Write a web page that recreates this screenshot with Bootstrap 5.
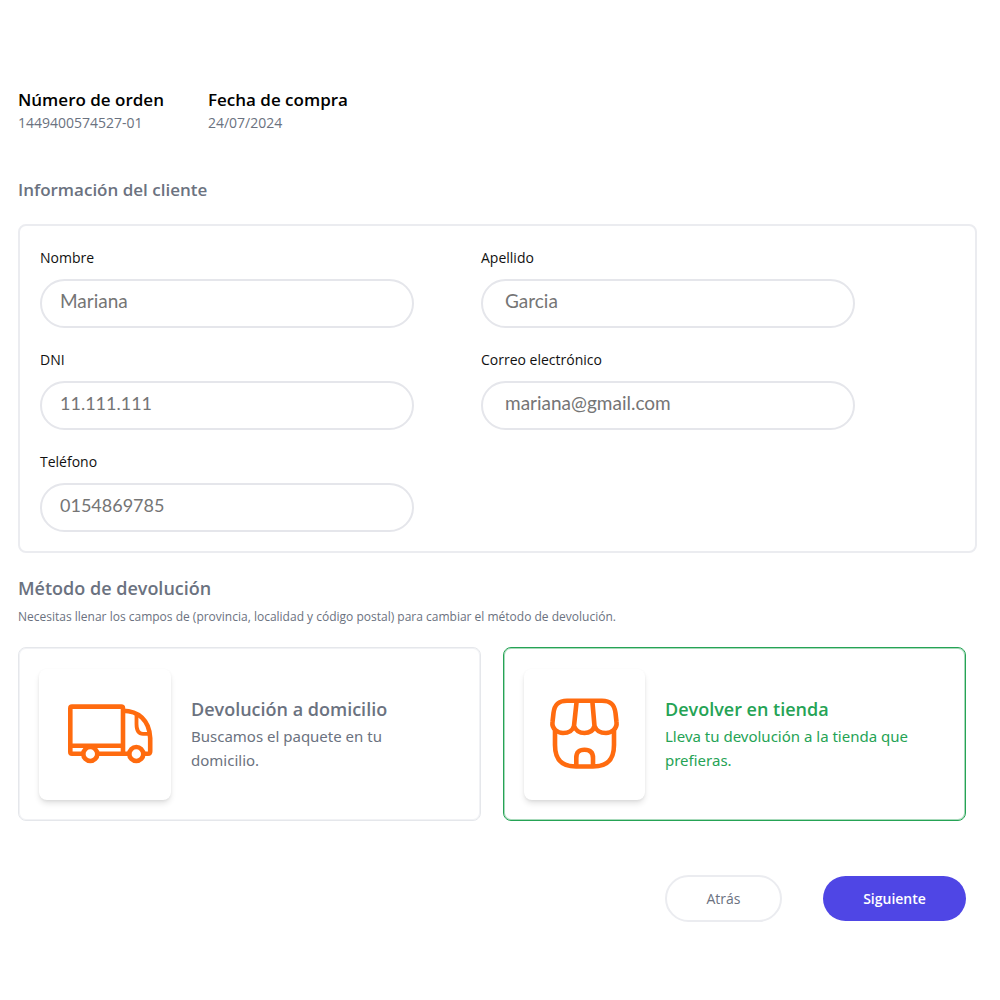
<!DOCTYPE html>
<html lang="es">
<head>
<meta charset="utf-8">
<meta name="viewport" content="width=device-width, initial-scale=1">
<title>Devolución de compra</title>
<link rel="stylesheet" href="https://cdn.jsdelivr.net/npm/bootstrap@5.3.0/dist/css/bootstrap.min.css">
<script src="https://cdn.jsdelivr.net/npm/bootstrap@5.3.0/dist/js/bootstrap.bundle.min.js" defer></script>
<style>
  :root { --gray: #6b7280; --line: #ebecf0; --green: #25a355; --indigo: #4f46e5; --orange: #ff6b0f; }
  body { font-family: "Open Sans", "Noto Sans", sans-serif; font-size: 14px; line-height: 20px; color: #111827; background: #fff; }
  .page-wrap { padding: 87px 23px 40px 18px; }
  .order-head { gap: 44px; margin-bottom: 44px; }
  .head-title { font-size: 17px; line-height: 26px; font-weight: 600; margin: 0; }
  .head-large { font-size: 18px; }
  .order-head .head-title { color: #000; }
  .gray-text { color: var(--gray); }
  .panel { border: 2px solid var(--line); border-radius: 8px; }
  .client-panel { padding: 22px 120px 19px 20px; margin: 21px 0 22px; }
  .client-grid { display: grid; grid-template-columns: 1fr 1fr; gap: 22px 67px; }
  .client-grid label { display: block; margin-bottom: 11px; color: #111; }
  .pill-input { height: 49px; border: 2px solid #e5e6eb; border-radius: 25px; padding: 0 18px 6px; font-family: Lato, sans-serif; font-size: 19px; color: #757575; }
  .pill-number { font-size: 18px; }
  .pill-wide { padding-left: 22px; }
  .hint { font-size: 12px; line-height: 20px; color: var(--gray); margin: 6px 0 20px; }
  .indent-end { padding-right: 11px; }
  .method-grid { display: grid; grid-template-columns: 1fr 1fr; gap: 22px; }
  .method { padding: 20px 46px 20px 20px; height: 174px; gap: 20px; border-width: 1px; box-shadow: inset 0 0 0 1px #f1f2f5; border-color: #e5e7eb; cursor: pointer; color: var(--gray); font-family: "Noto Sans", sans-serif; font-size: 15px; line-height: 24px; }
  .method .head-title { font-family: "Open Sans", sans-serif; margin-bottom: 2px; }
  .btn-check:checked + .method { color: var(--green); border-color: var(--green); box-shadow: inset 0 0 0 1px rgba(37,163,85,.4); }
  .tile { height: 131px; width: 132px; border-radius: 8px; box-shadow: 0 4px 6px -1px rgba(0,0,0,.13), 0 1px 3px rgba(0,0,0,.05); }
  .tile-slim { width: 121px; }
  .tile svg { fill: none; stroke: var(--orange); stroke-width: 5; stroke-linejoin: round; stroke-linecap: round; }
  .actions { gap: 41px; margin-top: 54px; }
  .pill-btn { border-radius: 24px; font-size: 14px; }
  .pill-back { width: 117px; height: 47px; border: 2px solid var(--line); color: var(--gray); background: #fff; }
  .pill-next { width: 143px; height: 45px; background: var(--indigo); color: #fff; font-weight: 600; }
  .pill-next:hover { background: #4338ca; color: #fff; }
</style>
</head>
<body>
<main class="page-wrap">
  <header class="order-head d-flex">
    <div>
      <h1 class="head-title">Número de orden</h1>
      <div class="gray-text">1449400574527-01</div>
    </div>
    <div>
      <h2 class="head-title">Fecha de compra</h2>
      <div class="gray-text">24/07/2024</div>
    </div>
  </header>

  <form>
    <h2 class="head-title gray-text">Información del cliente</h2>
    <section class="panel client-panel">
      <div class="client-grid">
        <div><label for="nombre">Nombre</label><input id="nombre" type="text" class="form-control pill-input" value="Mariana"></div>
        <div><label for="apellido">Apellido</label><input id="apellido" type="text" class="form-control pill-input pill-wide" value="Garcia"></div>
        <div><label for="dni">DNI</label><input id="dni" type="text" class="form-control pill-input pill-number" value="11.111.111"></div>
        <div><label for="correo">Correo electrónico</label><input id="correo" type="email" class="form-control pill-input pill-wide" value="mariana@gmail.com"></div>
        <div><label for="telefono">Teléfono</label><input id="telefono" type="tel" class="form-control pill-input pill-number" value="0154869785"></div>
      </div>
    </section>

    <h2 class="head-title head-large gray-text">Método de devolución</h2>
    <p class="hint">Necesitas llenar los campos de (provincia, localidad y código postal) para cambiar el método de devolución.</p>

    <div class="indent-end">
      <div class="method-grid">
        <div>
          <input type="radio" class="btn-check" name="metodo" id="domicilio">
          <label for="domicilio" class="panel method d-flex align-items-center">
            <span class="tile flex-shrink-0 d-flex align-items-center justify-content-center">
              <svg width="98" height="64" viewBox="0 0 98 64" aria-hidden="true">
                <path stroke-width="4.600" d="M27 51.800H16Q14.300 51.800 14.300 50V6.500Q14.300 4.600 16 4.600H65.200Q67 4.600 67 6.500V51.800M14.300 43.700H67M42 51.800H73M67 8.700C82 8.700 93.500 18 94.200 36V49.300Q94.200 51.800 92 51.800H88"/>
                <path stroke-width="3.800" d="M80.500 13V22C80.500 28.500 82.500 31.800 87 31.800H93"/>
                <circle stroke-width="4.600" cx="34.300" cy="52" r="7"/><circle stroke-width="4.600" cx="80.300" cy="52" r="7"/>
              </svg>
            </span>
            <span><strong class="head-title head-large d-block">Devolución a domicilio</strong>Buscamos el paquete en tu domicilio.</span>
          </label>
        </div>
        <div>
          <input type="radio" class="btn-check" name="metodo" id="tienda" checked>
          <label for="tienda" class="panel method d-flex align-items-center">
            <span class="tile tile-slim flex-shrink-0 d-flex align-items-center justify-content-center">
              <svg width="72" height="72" viewBox="0 0 72 72" aria-hidden="true">
                <path stroke-width="4.600" d="M6 33V47C6 62 13 68.500 27 68.500H44C58 68.500 65 62 65 47V33M27.300 68V60C27.300 54 30 51.800 35.500 51.800S44 54 44 60V68"/>
                <path stroke-width="4.600" d="M18 2.800H53C62 2.800 65.500 7 66.500 15L67.500 24C68.500 31 62 35 57 35C51 35 47 32 45.500 28C44 33 40 35 35.500 35S27 33 25 28C24 32 20 35 14 35C9 35 2.500 31 3.500 24L4.500 15C5.500 7 9 2.800 18 2.800ZM27.700 2.800L25 28M43.300 2.800L45.500 28"/>
              </svg>
            </span>
            <span><strong class="head-title head-large d-block">Devolver en tienda</strong>Lleva tu devolución a la tienda que prefieras.</span>
          </label>
        </div>
      </div>
      <div class="actions d-flex justify-content-end align-items-center">
        <button type="button" class="btn pill-btn pill-back">Atrás</button>
        <button type="submit" class="btn pill-btn pill-next">Siguiente</button>
      </div>
    </div>
  </form>
</main>
</body>
</html>
